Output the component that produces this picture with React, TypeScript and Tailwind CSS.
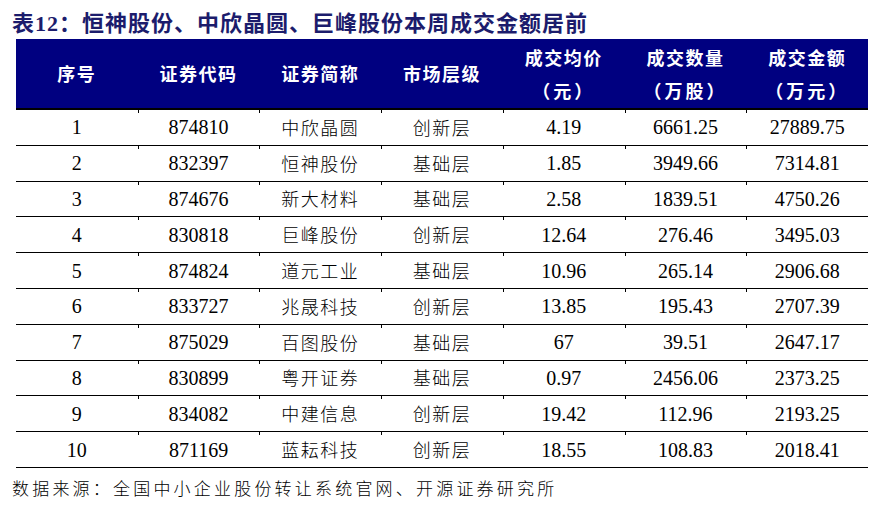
const rows = [
  ['1', '874810', '中欣晶圆', '创新层', '4.19', '6661.25', '27889.75'],
  ['2', '832397', '恒神股份', '基础层', '1.85', '3949.66', '7314.81'],
  ['3', '874676', '新大材料', '基础层', '2.58', '1839.51', '4750.26'],
  ['4', '830818', '巨峰股份', '创新层', '12.64', '276.46', '3495.03'],
  ['5', '874824', '道元工业', '基础层', '10.96', '265.14', '2906.68'],
  ['6', '833727', '兆晟科技', '创新层', '13.85', '195.43', '2707.39'],
  ['7', '875029', '百图股份', '基础层', '67', '39.51', '2647.17'],
  ['8', '830899', '粤开证券', '基础层', '0.97', '2456.06', '2373.25'],
  ['9', '834082', '中建信息', '创新层', '19.42', '112.96', '2193.25'],
  ['10', '871169', '蓝耘科技', '创新层', '18.55', '108.83', '2018.41'],
]

const cjk = "font-['Noto_Sans_CJK_SC',sans-serif]"

function HeadCell({ top, bottom }: { top: string; bottom?: string }) {
  return (
    <div className="flex flex-col items-center justify-center gap-[10px] text-[18px] font-bold tracking-[1.5px] leading-[23px] text-white">
      <span>{top}</span>
      {bottom && <span className="tracking-[3px]">{bottom}</span>}
    </div>
  )
}

export default function App() {
  return (
    <div className="h-[507px] w-[879px] bg-white text-black">
      <div className="pl-[12px] pt-[6px] h-[39px]">
        <h1 className={`${cjk} text-[22px] font-semibold leading-[30px] tracking-[1px] text-[#1c1c6c]`}>
          表<span className="font-['Liberation_Serif',serif] font-bold">12</span>：恒神股份、中欣晶圆、巨峰股份本周成交金额居前
        </h1>
      </div>

      <div className={`mx-[16px] w-[852px] ${cjk}`}>
        <div className="grid h-[71px] grid-cols-7 border-b-2 border-black bg-[#000080]">
          <HeadCell top="序号" />
          <HeadCell top="证券代码" />
          <HeadCell top="证券简称" />
          <HeadCell top="市场层级" />
          <HeadCell top="成交均价" bottom="（元）" />
          <HeadCell top="成交数量" bottom="（万股）" />
          <HeadCell top="成交金额" bottom="（万元）" />
        </div>

        {rows.map((r) => (
          <div key={r[0]} className="grid h-[35.8px] grid-cols-7 border-b border-black">
            {r.map((v, i) => (
              <div
                key={i}
                className={`relative flex items-center justify-center before:absolute before:left-0 before:top-0 before:h-[3px] before:w-px before:bg-black first:before:hidden ${
                  i === 2 || i === 3
                    ? 'text-[18px] tracking-[1.5px] font-light'
                    : "font-['Liberation_Serif',serif] text-[20px]"
                }`}
              >
                {v}
              </div>
            ))}
          </div>
        ))}
      </div>

      <p className={`${cjk} pl-[12px] pt-[8px] text-[17px] font-light leading-[24px] tracking-[3.2px]`}>
        数据来源：全国中小企业股份转让系统官网、开源证券研究所
      </p>
    </div>
  )
}
